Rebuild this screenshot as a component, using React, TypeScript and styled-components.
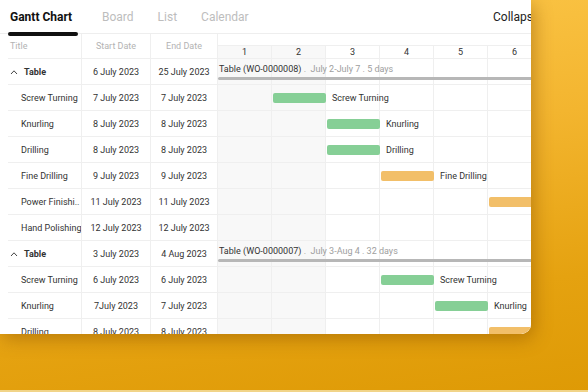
import { FC } from "react";
import styled, { createGlobalStyle } from "styled-components";

const GlobalStyle = createGlobalStyle`
    html, body {
        margin: 0;
        padding: 0;
    }
    body {
        width: 588px;
        height: 392px;
        overflow: hidden;
        font-family: Roboto, "Liberation Sans", sans-serif;
    }
`;

const COL = 54;
const DAYS = 8;

const Page = styled.div`
    width: 588px;
    height: 392px;
    overflow: hidden;
    background: linear-gradient(172deg, #fdc94d 0%, #f3b52f 40%, #e5a210 75%, #de9a05 100%);
    box-shadow: inset 0 -2px 0 #f1d488;
`;

const Card = styled.div`
    width: 531px;
    height: 334px;
    background: #ffffff;
    border-bottom-right-radius: 10px;
    overflow: hidden;
    box-shadow: 3px 5px 18px rgba(130, 75, 0, 0.45);
`;

const Board = styled.div`
    width: 640px;
    display: flex;
    flex-direction: column;
`;

const TabBar = styled.div`
    height: 33px;
    display: flex;
    align-items: stretch;
    gap: 24px;
    padding-left: 8px;
    border-bottom: 1px solid #eeeeee;
`;

const Tab = styled.div<{ $active?: boolean }>`
    position: relative;
    display: flex;
    align-items: center;
    font-size: 12px;
    font-weight: ${(p) => (p.$active ? 700 : 400)};
    color: ${(p) => (p.$active ? "#111111" : "#bdbdbd")};
    width: ${(p) => (p.$active ? "68px" : "auto")};
    padding-left: ${(p) => (p.$active ? "2px" : "0")};

    &::after {
        content: "";
        display: ${(p) => (p.$active ? "block" : "none")};
        position: absolute;
        left: 0;
        right: 0;
        bottom: -3px;
        height: 4px;
        border-radius: 2px;
        background: #111111;
    }
`;

const Collapse = styled.div`
    margin-left: auto;
    padding-right: 84px;
    display: flex;
    align-items: center;
    font-size: 12px;
    color: #222222;
    white-space: nowrap;
`;

const Body = styled.div`
    display: flex;
`;

const LeftTable = styled.div`
    width: 210px;
    padding-left: 8px;
    flex-shrink: 0;
`;

const TableRow = styled.div<{ $head?: boolean }>`
    display: grid;
    grid-template-columns: 74px 69px 67px;
    height: ${(p) => (p.$head ? "24px" : "25px")};
    border-bottom: 1px solid #efefef;
`;

const Cell = styled.div<{ $align?: "left" | "center"; $indent?: number; $muted?: boolean; $bold?: boolean }>`
    display: flex;
    align-items: center;
    justify-content: ${(p) => (p.$align === "left" ? "flex-start" : "center")};
    gap: 6px;
    padding-left: ${(p) => p.$indent ?? 0}px;
    border-right: 1px solid #efefef;
    font-size: 9px;
    font-weight: ${(p) => (p.$bold ? 700 : 400)};
    color: ${(p) => (p.$muted ? "#b3b3b3" : "#333333")};
    white-space: nowrap;
    overflow: hidden;
`;

const Chevron = styled.svg`
    width: 8px;
    height: 6px;
    flex-shrink: 0;
`;

const Gantt = styled.div`
    flex: 1;
    min-width: 0;
`;

const TopBand = styled.div`
    height: 11px;
    border-bottom: 1px solid #efefef;
`;

const DayGrid = styled.div<{ $tall?: boolean }>`
    position: relative;
    display: grid;
    grid-template-columns: repeat(${DAYS}, ${COL}px);
    height: ${(p) => (p.$tall ? "25px" : "12px")};
    border-bottom: 1px solid #efefef;
`;

const DayCell = styled.div<{ $shade?: boolean }>`
    display: flex;
    align-items: center;
    justify-content: center;
    border-right: 1px solid #efefef;
    background: ${(p) => (p.$shade ? "#f8f8f8" : "#ffffff")};
    font-size: 9px;
    color: #333333;
`;

const GroupInfo = styled.div`
    position: absolute;
    inset: 0 0 0 1px;
    display: flex;
    flex-direction: column;
    padding-top: 4px;
`;

const GroupLabel = styled.div`
    font-size: 9px;
    line-height: 12px;
    color: #333333;
    white-space: nowrap;

    span {
        color: #9e9e9e;
    }
`;

const GroupBar = styled.div`
    margin-top: 2px;
    margin-left: -1px;
    height: 3px;
    border-radius: 2px;
    background: #b7b7b7;
`;

const BarWrap = styled.div`
    position: absolute;
    top: 0;
    bottom: 0;
    display: flex;
    align-items: center;
    gap: 6px;
`;

const Bar = styled.div<{ $kind: "green" | "orange" }>`
    width: 53px;
    height: 10px;
    border-radius: 2px;
    background: ${(p) => (p.$kind === "green" ? "#86cf96" : "#f2bf69")};
    flex-shrink: 0;
`;

const BarLabel = styled.div`
    font-size: 9px;
    color: #333333;
    white-space: nowrap;
`;

type Task = { name: string; short?: string; start: string; end: string; day: number; kind: "green" | "orange" };
type Group = { code: string; range: string; days: number; start: string; end: string; tasks: Task[] };

const groups: Group[] = [
    {
        code: "WO-0000008",
        range: "July 2-July 7",
        days: 5,
        start: "6 July 2023",
        end: "25 July 2023",
        tasks: [
            { name: "Screw Turning", start: "7 July 2023", end: "7 July 2023", day: 2, kind: "green" },
            { name: "Knurling", start: "8 July 2023", end: "8 July 2023", day: 3, kind: "green" },
            { name: "Drilling", start: "8 July 2023", end: "8 July 2023", day: 3, kind: "green" },
            { name: "Fine Drilling", start: "9 July 2023", end: "9 July 2023", day: 4, kind: "orange" },
            { name: "Power Finishing", short: "Power Finishi..", start: "11 July 2023", end: "11 July 2023", day: 6, kind: "orange" },
            { name: "Hand Polishing", start: "12 July 2023", end: "12 July 2023", day: 8, kind: "orange" },
        ],
    },
    {
        code: "WO-0000007",
        range: "July 3-Aug 4",
        days: 32,
        start: "3 July 2023",
        end: "4 Aug 2023",
        tasks: [
            { name: "Screw Turning", start: "6 July 2023", end: "6 July 2023", day: 4, kind: "green" },
            { name: "Knurling", start: "7July 2023", end: "7 July 2023", day: 5, kind: "green" },
            { name: "Drilling", start: "8 July 2023", end: "8 July 2023", day: 6, kind: "orange" },
        ],
    },
];

const days = Array.from({ length: DAYS }, (_, i) => i + 1);

const Columns: FC<{ numbers?: boolean }> = ({ numbers }) => (
    <>
        {days.map((d) => (
            <DayCell key={d} $shade={d <= 2}>
                {numbers ? d : null}
            </DayCell>
        ))}
    </>
);

const App: FC = () => {
    return (
        <Page>
            <GlobalStyle />
            <Card>
                <Board>
                    <TabBar>
                        <Tab $active>Gantt Chart</Tab>
                        <Tab>Board</Tab>
                        <Tab>List</Tab>
                        <Tab>Calendar</Tab>
                        <Collapse>Collapse All</Collapse>
                    </TabBar>
                    <Body>
                        <LeftTable>
                            <TableRow $head>
                                <Cell $align="left" $indent={2} $muted>Title</Cell>
                                <Cell $muted>Start Date</Cell>
                                <Cell $muted>End Date</Cell>
                            </TableRow>
                            {groups.map((g) => (
                                <div key={g.code}>
                                    <TableRow>
                                        <Cell $align="left" $indent={2} $bold>
                                            <Chevron viewBox="0 0 8 6">
                                                <polyline points="1,5 4,1.8 7,5" fill="none" stroke="#444" strokeWidth="1" />
                                            </Chevron>
                                            Table
                                        </Cell>
                                        <Cell>{g.start}</Cell>
                                        <Cell>{g.end}</Cell>
                                    </TableRow>
                                    {g.tasks.map((t, i) => (
                                        <TableRow key={i}>
                                            <Cell $align="left" $indent={13}>{t.short ?? t.name}</Cell>
                                            <Cell>{t.start}</Cell>
                                            <Cell>{t.end}</Cell>
                                        </TableRow>
                                    ))}
                                </div>
                            ))}
                        </LeftTable>
                        <Gantt>
                            <TopBand />
                            <DayGrid>
                                <Columns numbers />
                            </DayGrid>
                            {groups.map((g) => (
                                <div key={g.code}>
                                    <DayGrid $tall>
                                        <Columns />
                                        <GroupInfo>
                                            <GroupLabel>
                                                Table ({g.code})
                                                <span>&nbsp;.&nbsp;&nbsp;{g.range} . {g.days} days</span>
                                            </GroupLabel>
                                            <GroupBar />
                                        </GroupInfo>
                                    </DayGrid>
                                    {g.tasks.map((t, i) => (
                                        <DayGrid $tall key={i}>
                                            <Columns />
                                            <BarWrap style={{ left: (t.day - 1) * COL + 1 }}>
                                                <Bar $kind={t.kind} />
                                                <BarLabel>{t.name}</BarLabel>
                                            </BarWrap>
                                        </DayGrid>
                                    ))}
                                </div>
                            ))}
                        </Gantt>
                    </Body>
                </Board>
            </Card>
        </Page>
    );
};

export default App;
